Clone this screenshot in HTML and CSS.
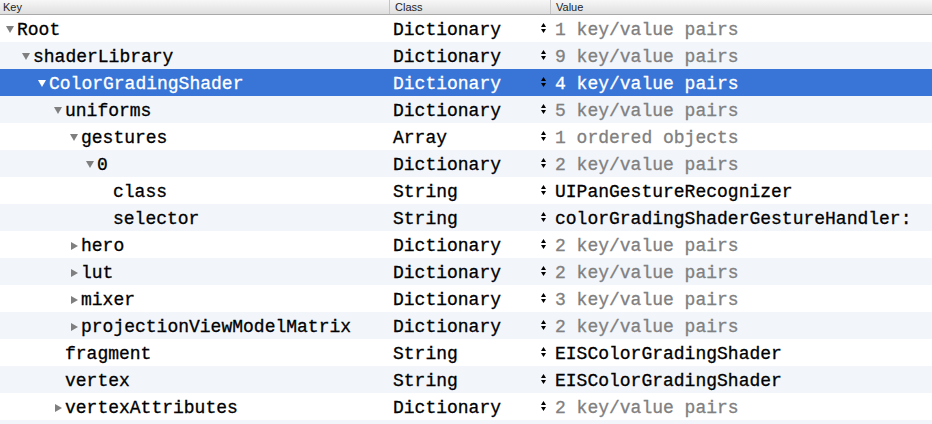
FILE: index.html
```html
<!DOCTYPE html>
<html>
<head>
<meta charset="utf-8">
<link rel="stylesheet" href="styles.css">
</head>
<body>
<div class="plist">
  <div class="head">
    <div class="hcell hkey">Key</div>
    <div class="hcell hclass">Class</div>
    <div class="hcell hvalue">Value</div>
  </div>

  <div class="row">
    <div class="key l0"><span class="disc"><svg class="down" width="8" height="7" viewBox="0 0 8 7"><polygon points="0,0 8,0 4,7"/></svg></span>Root</div>
    <div class="cls">Dictionary<svg class="step" width="5" height="10" viewBox="0 0 5 10"><polygon points="0,4 2.5,0 5,4"/><polygon points="0,6 5,6 2.5,10"/></svg></div>
    <div class="val dim">1 key/value pairs</div>
  </div>
  <div class="row">
    <div class="key l1"><span class="disc"><svg class="down" width="8" height="7" viewBox="0 0 8 7"><polygon points="0,0 8,0 4,7"/></svg></span>shaderLibrary</div>
    <div class="cls">Dictionary<svg class="step" width="5" height="10" viewBox="0 0 5 10"><polygon points="0,4 2.5,0 5,4"/><polygon points="0,6 5,6 2.5,10"/></svg></div>
    <div class="val dim">9 key/value pairs</div>
  </div>
  <div class="row sel">
    <div class="key l2"><span class="disc"><svg class="down" width="8" height="7" viewBox="0 0 8 7"><polygon points="0,0 8,0 4,7"/></svg></span>ColorGradingShader</div>
    <div class="cls">Dictionary<svg class="step" width="5" height="10" viewBox="0 0 5 10"><polygon points="0,4 2.5,0 5,4"/><polygon points="0,6 5,6 2.5,10"/></svg></div>
    <div class="val dim">4 key/value pairs</div>
  </div>
  <div class="row">
    <div class="key l3"><span class="disc"><svg class="down" width="8" height="7" viewBox="0 0 8 7"><polygon points="0,0 8,0 4,7"/></svg></span>uniforms</div>
    <div class="cls">Dictionary<svg class="step" width="5" height="10" viewBox="0 0 5 10"><polygon points="0,4 2.5,0 5,4"/><polygon points="0,6 5,6 2.5,10"/></svg></div>
    <div class="val dim">5 key/value pairs</div>
  </div>
  <div class="row">
    <div class="key l4"><span class="disc"><svg class="down" width="8" height="7" viewBox="0 0 8 7"><polygon points="0,0 8,0 4,7"/></svg></span>gestures</div>
    <div class="cls">Array<svg class="step" width="5" height="10" viewBox="0 0 5 10"><polygon points="0,4 2.5,0 5,4"/><polygon points="0,6 5,6 2.5,10"/></svg></div>
    <div class="val dim">1 ordered objects</div>
  </div>
  <div class="row">
    <div class="key l5"><span class="disc"><svg class="down" width="8" height="7" viewBox="0 0 8 7"><polygon points="0,0 8,0 4,7"/></svg></span>0</div>
    <div class="cls">Dictionary<svg class="step" width="5" height="10" viewBox="0 0 5 10"><polygon points="0,4 2.5,0 5,4"/><polygon points="0,6 5,6 2.5,10"/></svg></div>
    <div class="val dim">2 key/value pairs</div>
  </div>
  <div class="row">
    <div class="key l6"><span class="disc"></span>class</div>
    <div class="cls">String<svg class="step" width="5" height="10" viewBox="0 0 5 10"><polygon points="0,4 2.5,0 5,4"/><polygon points="0,6 5,6 2.5,10"/></svg></div>
    <div class="val">UIPanGestureRecognizer</div>
  </div>
  <div class="row">
    <div class="key l6"><span class="disc"></span>selector</div>
    <div class="cls">String<svg class="step" width="5" height="10" viewBox="0 0 5 10"><polygon points="0,4 2.5,0 5,4"/><polygon points="0,6 5,6 2.5,10"/></svg></div>
    <div class="val">colorGradingShaderGestureHandler:</div>
  </div>
  <div class="row">
    <div class="key l4"><span class="disc"><svg class="right" width="7" height="8" viewBox="0 0 7 8"><polygon points="0,0 7,4 0,8"/></svg></span>hero</div>
    <div class="cls">Dictionary<svg class="step" width="5" height="10" viewBox="0 0 5 10"><polygon points="0,4 2.5,0 5,4"/><polygon points="0,6 5,6 2.5,10"/></svg></div>
    <div class="val dim">2 key/value pairs</div>
  </div>
  <div class="row">
    <div class="key l4"><span class="disc"><svg class="right" width="7" height="8" viewBox="0 0 7 8"><polygon points="0,0 7,4 0,8"/></svg></span>lut</div>
    <div class="cls">Dictionary<svg class="step" width="5" height="10" viewBox="0 0 5 10"><polygon points="0,4 2.5,0 5,4"/><polygon points="0,6 5,6 2.5,10"/></svg></div>
    <div class="val dim">2 key/value pairs</div>
  </div>
  <div class="row">
    <div class="key l4"><span class="disc"><svg class="right" width="7" height="8" viewBox="0 0 7 8"><polygon points="0,0 7,4 0,8"/></svg></span>mixer</div>
    <div class="cls">Dictionary<svg class="step" width="5" height="10" viewBox="0 0 5 10"><polygon points="0,4 2.5,0 5,4"/><polygon points="0,6 5,6 2.5,10"/></svg></div>
    <div class="val dim">3 key/value pairs</div>
  </div>
  <div class="row">
    <div class="key l4"><span class="disc"><svg class="right" width="7" height="8" viewBox="0 0 7 8"><polygon points="0,0 7,4 0,8"/></svg></span>projectionViewModelMatrix</div>
    <div class="cls">Dictionary<svg class="step" width="5" height="10" viewBox="0 0 5 10"><polygon points="0,4 2.5,0 5,4"/><polygon points="0,6 5,6 2.5,10"/></svg></div>
    <div class="val dim">2 key/value pairs</div>
  </div>
  <div class="row">
    <div class="key l3"><span class="disc"></span>fragment</div>
    <div class="cls">String<svg class="step" width="5" height="10" viewBox="0 0 5 10"><polygon points="0,4 2.5,0 5,4"/><polygon points="0,6 5,6 2.5,10"/></svg></div>
    <div class="val">EISColorGradingShader</div>
  </div>
  <div class="row">
    <div class="key l3"><span class="disc"></span>vertex</div>
    <div class="cls">String<svg class="step" width="5" height="10" viewBox="0 0 5 10"><polygon points="0,4 2.5,0 5,4"/><polygon points="0,6 5,6 2.5,10"/></svg></div>
    <div class="val">EISColorGradingShader</div>
  </div>
  <div class="row">
    <div class="key l3"><span class="disc"><svg class="right" width="7" height="8" viewBox="0 0 7 8"><polygon points="0,0 7,4 0,8"/></svg></span>vertexAttributes</div>
    <div class="cls">Dictionary<svg class="step" width="5" height="10" viewBox="0 0 5 10"><polygon points="0,4 2.5,0 5,4"/><polygon points="0,6 5,6 2.5,10"/></svg></div>
    <div class="val dim">2 key/value pairs</div>
  </div>
  <div class="row filler"></div>
</div>
</body>
</html>
```

FILE: styles.css
```css
html, body {
  margin: 0;
  padding: 0;
  background: #ffffff;
}

.plist {
  width: 932px;
  height: 424px;
  overflow: hidden;
  background: #ffffff;
}

.head {
  display: grid;
  grid-template-columns: 390px 161px 1fr;
  height: 14px;
  border-bottom: 1px solid #a9a9a9;
  background: linear-gradient(#f7f7f7, #dfdfdf);
  font-family: "Liberation Sans", Arial, sans-serif;
  font-size: 11px;
  line-height: 14px;
  color: #1e1e1e;
}

.hcell {
  overflow: hidden;
  white-space: nowrap;
}

.hkey {
  padding-left: 3px;
  border-right: 1px solid #c4c4c4;
}

.hclass {
  padding-left: 5px;
  border-right: 1px solid #c4c4c4;
}

.hvalue {
  padding-left: 5px;
}

.row {
  display: grid;
  grid-template-columns: 390px 161px 1fr;
  height: 27px;
  box-sizing: border-box;
  padding-top: 4px;
  font-family: "Liberation Mono", "Courier New", monospace;
  font-size: 18px;
  line-height: 23px;
  color: #000000;
  white-space: nowrap;
  -webkit-text-stroke: 0.3px currentColor;
}

.row:nth-child(odd) {
  background: #f2f5fa;
}

.row.sel {
  background: #3875d7;
  color: #ffffff;
}

.key {
  display: flex;
  align-items: center;
  overflow: hidden;
}

.l0 { padding-left: 6px; }
.l1 { padding-left: 22px; }
.l2 { padding-left: 38px; }
.l3 { padding-left: 54px; }
.l4 { padding-left: 70px; }
.l5 { padding-left: 86px; }
.l6 { padding-left: 102px; }

.disc {
  display: flex;
  align-items: center;
  width: 11px;
  height: 23px;
  flex: none;
}

.disc svg {
  fill: #7f7f7f;
  display: block;
}

.disc .down {
  margin-top: -2px;
}

.disc .right {
  margin-left: 1px;
  margin-top: -1px;
}

.sel .disc svg {
  fill: #ffffff;
}

.cls {
  display: flex;
  align-items: center;
  justify-content: space-between;
  padding: 0 5px 0 3px;
}

.step {
  fill: #000000;
  display: block;
  flex: none;
  margin-top: -6px;
}

.val {
  padding-left: 4px;
  overflow: hidden;
}

.val.dim {
  color: #808080;
}

.sel .val.dim {
  color: #ffffff;
}
```
